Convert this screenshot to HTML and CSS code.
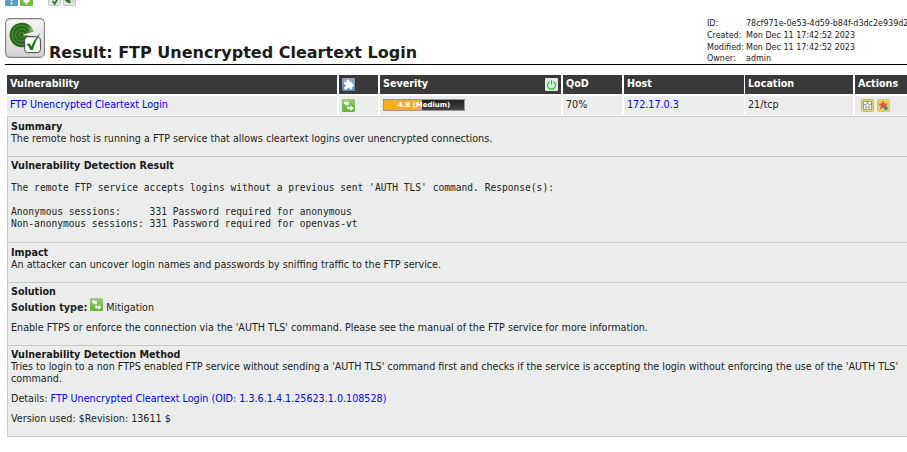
FILE: index.html
```html
<!DOCTYPE html>
<html lang="en">
<head>
<meta charset="utf-8">
<title>Result: FTP Unencrypted Cleartext Login</title>
<link rel="stylesheet" href="styles.css">
</head>
<body>
<svg class="defs" aria-hidden="true">
  <defs>
    <linearGradient id="grey" x1="0" y1="0" x2="0" y2="1"><stop offset="0" stop-color="#f7f7f7"/><stop offset="1" stop-color="#d2d2d2"/></linearGradient>
    <linearGradient id="green" x1="0" y1="0" x2="0" y2="1"><stop offset="0" stop-color="#a3c884"/><stop offset=".5" stop-color="#7abc50"/><stop offset="1" stop-color="#66b430"/></linearGradient>
    <linearGradient id="blue" x1="0" y1="0" x2="0" y2="1"><stop offset="0" stop-color="#9aa9b9"/><stop offset="1" stop-color="#5382ab"/></linearGradient>
    <linearGradient id="sweep" x1="0" y1="0" x2="1" y2="0"><stop offset=".5" stop-color="#286b16"/><stop offset="1" stop-color="#b5d0a6"/></linearGradient>
    <symbol id="mitigation" viewBox="0 0 13 13">
      <rect width="13" height="13" rx="1.2" fill="url(#green)"/>
      <path d="M1.5 4 4.6 1.4v1.7h2.2v3.2H5.2V5H4.6v1.7zM11.7 9.2 8.6 12v-1.8H5.4V7.4h1.7v1h1.5V6.5z" fill="#fff"/>
    </symbol>
  </defs>
</svg>
<div class="toolbar">
  <svg class="help" viewBox="0 0 13 13"><rect width="13" height="13" rx="1" fill="#5c9fc2"/><path d="M4.3 4.5c0-3 4.5-3 4.5-.2 0 1.7-2.2 1.7-2.2 3.7M6.6 9.2v2" fill="none" stroke="#fff" stroke-width="1.7"/></svg>
  <svg class="download" viewBox="0 0 13 13"><rect width="13" height="13" rx="1" fill="#71bd43"/><path d="M4.7 2h3.6v5.2h2L6.5 11.5 2.7 7.2h2z" fill="#fff"/></svg>
  <svg class="result" viewBox="0 0 13 13"><rect x=".5" y=".5" width="12" height="12" rx="1" fill="#e4e4e4" stroke="#c6c6c6"/><path d="m4.5 8 2.3 3L10.5 4" fill="none" stroke="#15801a" stroke-width="1.7"/></svg>
  <svg viewBox="0 0 13 13"><rect x=".5" y=".5" width="12" height="12" rx="1" fill="#e4e4e4" stroke="#c6c6c6"/><path d="M2 6.5q0-4 4-4l5 2-4 3 1 2.5Q3 10.5 2 6.5" fill="#407039"/><path d="m7 8 4-1v3z" fill="#ccc"/></svg>
</div>
<header class="heading">
  <svg class="logo" viewBox="0 0 40 40">
    <rect x=".6" y=".6" width="38.8" height="38.8" rx="4.5" fill="url(#grey)" stroke="#808080" stroke-width="1.1"/>
    <circle cx="16.8" cy="17" r="12.2" fill="#286b16"/>
    <path d="M16.8 17V4.8A12.2 12.2 0 0 1 28.3 13z" fill="url(#sweep)"/>
    <g fill="none" stroke="#97b982" stroke-opacity=".6" stroke-width=".7"><circle cx="16.8" cy="17" r="9.6"/><circle cx="16.8" cy="17" r="6.2"/><circle cx="16.8" cy="17" r="2.8"/></g>
    <path d="m17 17 12-3.7v5z" fill="#e9ede6"/>
    <rect x="19.7" y="18.8" width="15.7" height="15.8" rx="3" fill="#fff" stroke="#444" stroke-width="1"/>
    <path d="m21.6 26.2 2.8-1 2 3.4c2.1-5.5 4.9-9.6 9-13.6-3.3 5.1-5.8 10.6-7.6 17h-2.4c-.8-2.2-2-4.1-3.8-5.8" fill="#087d0b"/>
  </svg>
  <h1>Result: FTP Unencrypted Cleartext Login</h1>
  <dl class="meta">
    <dt>ID:</dt><dd>78cf971e-0e53-4d59-b84f-d3dc2e939d2</dd>
    <dt>Created:</dt><dd>Mon Dec 11 17:42:52 2023</dd>
    <dt>Modified:</dt><dd>Mon Dec 11 17:42:52 2023</dd>
    <dt>Owner:</dt><dd>admin</dd>
  </dl>
</header>
<main>
  <div class="grid head">
    <div>Vulnerability</div>
    <div><svg class="icon" viewBox="0 0 13 13"><rect width="13" height="13" rx="1" fill="url(#blue)"/><path d="M2.2 3.8h2.7C3.7.8 8.3.8 7.3 3.8h3v2.4c2.3-.9 2.3 3.2 0 2.6v2.7H7.6c.5-2.5-2.6-2.5-2.1 0H2.2V8.8c2.2.5 2.2-2.7 0-2.3z" fill="#fff"/></svg></div>
    <div class="between">Severity<svg class="icon" viewBox="0 0 13 13"><rect width="13" height="13" rx="1" fill="#e4e8e3"/><path d="M4.3 3.8a4 4 0 1 0 4.4 0M6.5 2v4.7" fill="none" stroke="#1fca20" stroke-width="1.2"/></svg></div>
    <div>QoD</div><div>Host</div><div>Location</div><div>Actions</div>
  </div>
  <div class="grid row">
    <div><a>FTP Unencrypted Cleartext Login</a></div>
    <div><svg class="icon"><use href="#mitigation"/></svg></div>
    <div><span class="severity">4.8 (Medium)</span></div>
    <div>70%</div><div><a>172.17.0.3</a></div><div>21/tcp</div>
    <div class="actions">
      <svg class="icon" viewBox="0 0 13 13"><rect x=".5" y=".5" width="12" height="12" rx="1" fill="#e2d37b" stroke="#cbb953"/><path d="M2.5 2.5h8v8h-8z" fill="#f5f5ef" stroke="#8a8a76" stroke-width=".8"/><path d="m6.5 3 .9 2.3h2.4L7.9 6.8l.8 2.6-2.2-1.5-2.2 1.5.8-2.6-1.9-1.5h2.4z" fill="#eee" stroke="#777" stroke-width=".6"/></svg>
      <svg class="icon" viewBox="0 0 13 13"><rect x=".5" y=".5" width="12" height="12" rx="1" fill="#e6d15a" stroke="#d9c776"/><path d="m6.2 2 1.2 2.9h3.1L8 6.8l1 3.1-2.8-1.8-2.8 1.8 1-3.1-2.5-1.9H5z" fill="#df5348" stroke="#df5348" stroke-width=".7"/><circle cx="8.8" cy="9" r="2" fill="#3989aa"/></svg>
    </div>
  </div>
  <div class="details">
    <section class="summary"><h2>Summary</h2><p>The remote host is running a FTP service that allows cleartext logins over unencrypted connections.</p></section>
    <section class="detection"><h2>Vulnerability Detection Result</h2><pre>The remote FTP service accepts logins without a previous sent 'AUTH TLS' command. Response(s):

Anonymous sessions:     331 Password required for anonymous
Non-anonymous sessions: 331 Password required for openvas-vt</pre></section>
    <section class="impact"><h2>Impact</h2><p>An attacker can uncover login names and passwords by sniffing traffic to the FTP service.</p></section>
    <section class="solution"><h2>Solution</h2><div class="type"><b>Solution type:</b><svg class="icon"><use href="#mitigation"/></svg><span>Mitigation</span></div><p>Enable FTPS or enforce the connection via the 'AUTH TLS' command. Please see the manual of the FTP service for more information.</p></section>
    <section class="method"><h2>Vulnerability Detection Method</h2><p>Tries to login to a non FTPS enabled FTP service without sending a 'AUTH TLS' command first and checks if the service is accepting the login without enforcing the use of the 'AUTH TLS'<br>command.</p><p class="gap">Details: <a>FTP Unencrypted Cleartext Login (OID: 1.3.6.1.4.1.25623.1.0.108528)</a></p><p class="gap">Version used: $Revision: 13611 $</p></section>
  </div>
</main>
</body>
</html>
```
FILE: styles.css
```css
* { box-sizing: border-box; }
body { margin: 0; height: 452px; overflow: hidden; background: #fff; color: #222; font: 9.6px/12px "DejaVu Sans", sans-serif; white-space: nowrap; }
h1, h2, p, pre, dl, dd { margin: 0; }
svg { display: block; flex: none; }
a { color: #00f; }
.defs { position: absolute; width: 0; height: 0; }
.toolbar { display: flex; align-items: flex-end; height: 6px; padding-left: 5px; gap: 2px; overflow: hidden; }
.toolbar svg { width: 13px; height: 13px; }
.toolbar .result { margin-left: 13px; }
.heading { display: flex; height: 59px; margin-left: 5px; border-bottom: 1px solid #000; }
.logo { width: 40px; height: 40px; margin-top: 12px; }
h1 { flex: none; width: 658px; margin: 37px 0 0 4px; font-size: 16px; line-height: 20px; color: #1b1b1b; }
.meta { flex: none; display: grid; grid-template-columns: 39px 161px; grid-template-rows: 12px 12px 11px 11px; margin-top: 12px; font-size: 8px; line-height: 12px; }
main { margin: 10px 0 0 7px; }
.grid { display: grid; grid-template-columns: 330px 39px 181px 59px 120px 108px 60px; column-gap: 2px; height: 19px; }
.grid > div { padding: 3px 3px 0; }
.grid > div:nth-child(n+6) { margin-left: -1px; margin-right: 1px; }
.head { color: #fff; font-weight: bold; margin-bottom: 2px; }
.head > div { background: #393939; }
.row > div, .details { background: #ebedec; }
.icon { width: 13px; height: 13px; }
.between { display: flex; justify-content: space-between; }
.actions { display: flex; gap: 3px; }
.grid .actions { padding-left: 6px; }
.severity { display: block; width: 82px; height: 12px; border: 1px solid #969696; background: linear-gradient(90deg, #f4ac20 47.5%, transparent 47.5%), linear-gradient(#222, #444); color: #fff; font-size: 7px; line-height: 10px; font-weight: bold; text-align: center; }
.details { margin-top: 1px; height: 321px; border: 1px solid #c8c8c8; border-right: 0; }
section { padding: 3px 3px 0; border-bottom: 1px solid #c8c8c8; }
h2 { font-size: 9.6px; line-height: 12px; color: #191919; }
.summary, .impact { height: 40px; padding-top: 4px; }
.detection { height: 86px; }
.solution { height: 63px; }
.method { height: 90px; border-bottom: 0; }
pre { margin-top: 10px; font: 9.6px/12px "DejaVu Sans Mono", monospace; }
.type { display: flex; height: 20px; line-height: 20px; margin-bottom: 4px; }
.type .icon { margin: 0 3px; }
.gap { margin-top: 8px; }
```
